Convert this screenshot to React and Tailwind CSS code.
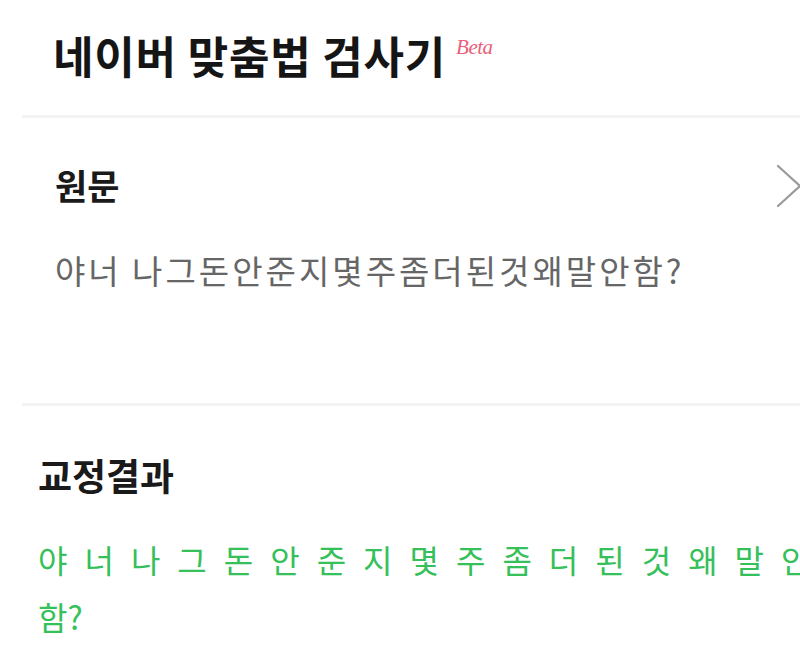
import React from 'react';

const sans = { fontFamily: '"Noto Sans CJK KR", "Noto Sans", sans-serif' };

const CloseMark = () => (
  <svg width="24" height="46" viewBox="0 0 24 46" className="absolute left-[776px] top-[45px]">
    <line x1="2" y1="3" x2="46" y2="43" stroke="#9a9a9a" strokeWidth="2.2" strokeLinecap="round" />
    <line x1="2" y1="43" x2="46" y2="3" stroke="#9a9a9a" strokeWidth="2.2" strokeLinecap="round" />
  </svg>
);

export default function App() {
  return (
    <div className="w-[800px] h-[662px] overflow-hidden bg-white" style={sans}>
      <div className="pt-[32px] pl-[53px] flex items-start">
        <h1 className="text-[44px] leading-[46px] font-bold text-[#151515] tracking-[0.8px]">네이버 맞춤법 검사기</h1>
        <span
          className="ml-[10px] mt-[4px] text-[21px] leading-[22px] italic text-[#e8607a] tracking-[-0.5px]"
          style={{ fontFamily: '"Liberation Serif", serif' }}
        >
          Beta
        </span>
      </div>
      <div className="mt-[37px] ml-[22px] h-[3px] bg-[#f3f3f3]" />

      <section className="relative pl-[55px] pt-[47px] pb-[113px]">
        <h2 className="text-[35px] leading-[40px] font-bold text-[#1a1a1a]">원문</h2>
        <CloseMark />
        <p className="mt-[45px] text-[33px] leading-[40px] text-[#666666] tracking-[3px]">
          야너 나그돈안준지몇주좀더된것왜말안함?
        </p>
      </section>
      <div className="ml-[22px] h-[3px] bg-[#f3f3f3]" />

      <section className="pl-[38px] pt-[49px]">
        <h2 className="text-[37px] leading-[40px] font-bold text-[#1a1a1a]">교정결과</h2>
        <p className="mt-[36px] w-[815px] text-[32px] leading-[57px] text-[#35c05a] tracking-[17px]">
          야너나그돈안준지몇주좀더된것왜말안<span className="tracking-normal">함?</span>
        </p>
      </section>
    </div>
  );
}
